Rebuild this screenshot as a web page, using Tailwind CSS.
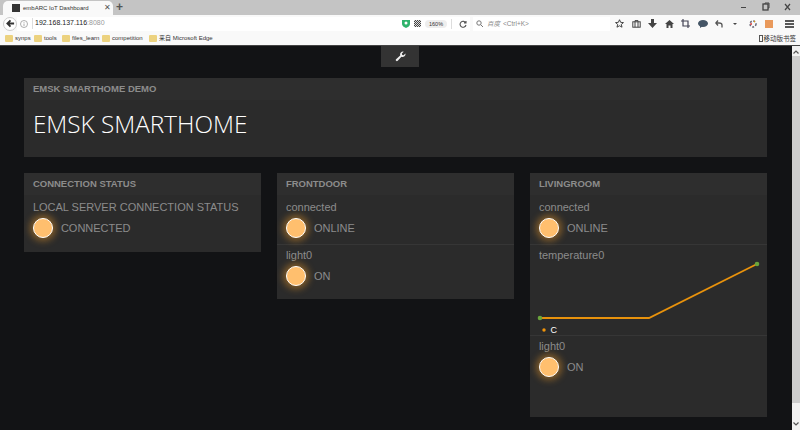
<!DOCTYPE html>
<html><head><meta charset="utf-8"><script src="https://cdn.jsdelivr.net/npm/@tailwindcss/browser@4"></script></head>
<body class="relative w-[800px] h-[430px] overflow-hidden bg-[#121315] font-['Liberation_Sans',sans-serif]">
<div class="h-[46px] flex flex-col bg-[#f9f9f9] border-b border-[#444]">
  <div class="h-[15px] bg-[#c4c4c4] flex items-end">
    <div class="ml-[3px] w-[110px] h-[14px] bg-[#f9f9f9] rounded-t-[5px] flex items-center pl-[9px] gap-[3px] text-[6px] text-[#333]">
      <span class="w-[8px] h-[8px] bg-[#333] shrink-0"></span><span class="w-[78px] whitespace-nowrap">embARC IoT Dashboard</span><span class="text-[#555] text-[8px]">✕</span>
    </div>
    <span class="ml-[3px] text-[12px] font-bold leading-[15px] text-[#555]">+</span>
    <div class="ml-auto flex items-center h-[15px] text-[#444]">
      <svg width="80" height="15" viewBox="0 0 80 15" fill="none" stroke="#444"><path d="M21 7.5h5"/><rect x="43" y="4" width="5" height="6" stroke-width="1.3"/><path d="M45 4V3h4v5h-1"/><path d="M65 4l5 6M70 4l-5 6" stroke-width="1.2"/></svg>
    </div>
  </div>
  <div class="h-[17px] flex items-center pl-[3px]">
    <div class="w-[14px] h-[14px] rounded-full border border-[#ccc] bg-white flex items-center justify-center shrink-0">
      <svg width="9" height="9" viewBox="0 0 10 10" fill="none" stroke="#333" stroke-width="2"><path d="M9 5H2M5 1.5L1.5 5 5 8.5"/></svg>
    </div>
    <div class="w-[453px] h-[14px] bg-white flex items-center text-[7px] text-[#222] relative">
      <svg class="ml-[3px] mr-[5px] shrink-0" width="8" height="8" viewBox="0 0 8 8" fill="none" stroke="#999" stroke-width="0.8"><circle cx="4" cy="4" r="3.5"/><path d="M4 3.5V6M4 2v.8"/></svg>
      <span class="border-l border-[#ddd] pl-[2px] -ml-[1px]">192.168.137.116<span class="text-[#999]">:8080</span></span>
      <div class="ml-auto flex items-center gap-[4px]">
        <svg width="8" height="9" viewBox="0 0 8 9"><path d="M0 1h8v4c0 2-2 3-4 4-2-1-4-2-4-4z" fill="#2fb36c"/><circle cx="4" cy="4" r="1.5" fill="#fff"/></svg>
        <span class="w-[7px] h-[7px] bg-[repeating-conic-gradient(#444_0_25%,#ddd_0_50%)] bg-[length:2px_2px]"></span>
        <span class="w-[22px] h-[8px] rounded-full bg-[#eee] text-[5.5px] leading-[8px] text-center text-[#333]">160%</span>
        <span class="w-px h-[10px] bg-[#ddd]"></span>
        <svg class="mx-[3px]" width="8" height="8" viewBox="0 0 8 8" fill="none" stroke="#555" stroke-width="1.1"><path d="M6.8 3A3 3 0 1 0 7 5M7 1v2H5"/></svg>
      </div>
    </div>
    <div class="w-[137px] h-[14px] bg-white ml-[3px] text-[6.5px] text-[#888] flex items-center pl-[3px] gap-[3px] font-['Liberation_Sans','Noto_Sans_CJK_SC',sans-serif]">
      <svg width="7" height="7" viewBox="0 0 7 7" fill="none" stroke="#777"><circle cx="3" cy="3" r="2.2"/><path d="M4.6 4.6L7 7"/></svg>
      <span class="ml-[1px] italic">百度</span><span>&lt;Ctrl+K&gt;</span>
    </div>
    <div class="flex-1 flex items-center pl-[5px] pr-[6px] justify-between">
      <svg width="9" height="9" viewBox="0 0 10 10" fill="none" stroke="#333" stroke-width="1"><path d="M5 .8l1.3 2.9 3.1.3-2.4 2 .8 3.1L5 7.5 2.2 9.1 3 6 .6 4l3.1-.3z"/></svg>
      <svg width="9" height="8" viewBox="0 0 9 8" fill="none" stroke="#444"><rect x=".8" y="1.8" width="7.4" height="5.4"/><path d="M3 1.8V.6h3v1.2M3 1.8v5.4M6 1.8v5.4"/></svg>
      <svg width="9" height="9" viewBox="0 0 9 9" fill="#444"><path d="M3 0h3v4h3L4.5 9 0 4h3z"/></svg>
      <svg width="9" height="8" viewBox="0 0 9 8" fill="#444"><path d="M4.5 0L9 4H7.5v4h-2V5.5h-2V8h-2V4H0z"/></svg>
      <svg width="9" height="9" viewBox="0 0 9 9" fill="none" stroke="#445" stroke-width="1.2"><path d="M2 0v7h7M0 2h7v7"/></svg>
      <svg width="10" height="8" viewBox="0 0 10 8" fill="#456"><ellipse cx="5" cy="3.5" rx="5" ry="3.5"/><path d="M2 5v3l3-2z"/></svg>
      <svg width="8" height="8" viewBox="0 0 8 8" fill="none" stroke="#555" stroke-width="1.3"><path d="M7 7.5V5C7 3.5 6 3 4 3H1M3 .5L.8 3 3 5.5"/></svg>
      <svg width="8" height="8" viewBox="0 0 8 8"><path d="M4 5L2 3h4z" fill="#444"/></svg>
      <svg width="8" height="8" viewBox="0 0 8 8" fill="none" stroke-width="1.5" class="ml-[3px]"><circle cx="4" cy="4" r="3" stroke="#667" stroke-dasharray="2 1.5"/><path d="M1.2 4H3" stroke="#d33"/><path d="M5 1.5h1" stroke="#e90"/></svg>
      <span class="w-[8px] h-[8px] bg-[#e9995b]"></span>
      <svg class="ml-[5px]" width="9" height="8" viewBox="0 0 9 8" stroke="#222" stroke-width="1.3"><path d="M0 1h9M0 4h9M0 7h9"/></svg>
    </div>
  </div>
  <div class="h-[13px] flex items-center pl-[5px] text-[6px] text-[#333]">
    <div class="w-[29px] flex items-center gap-[2px]"><i class="w-[8px] h-[7px] rounded-[1px] bg-[#ecd27f]"></i><span>synps</span></div>
    <div class="w-[28px] flex items-center gap-[2px]"><i class="w-[8px] h-[7px] rounded-[1px] bg-[#ecd27f]"></i><span>tools</span></div>
    <div class="w-[40px] flex items-center gap-[2px]"><i class="w-[8px] h-[7px] rounded-[1px] bg-[#ecd27f]"></i><span>files_learn</span></div>
    <div class="w-[47px] flex items-center gap-[2px]"><i class="w-[8px] h-[7px] rounded-[1px] bg-[#ecd27f]"></i><span>competition</span></div>
    <div class="flex items-center gap-[2px]"><i class="w-[8px] h-[7px] rounded-[1px] bg-[#ecd27f]"></i><span class="font-['Liberation_Sans','Noto_Sans_CJK_SC',sans-serif]">来自 Microsoft Edge</span></div>
    <span class="ml-auto mr-[4px] flex items-center gap-[1px] text-[6.5px] font-['Noto_Sans_CJK_SC',sans-serif]"><i class="w-[4px] h-[7px] border border-[#555]"></i>移动版书签</span>
  </div>
</div>
<div class="flex justify-center"><div class="w-[38px] h-[21px] bg-[#333] flex items-center justify-center">
  <svg width="11" height="11" viewBox="0 0 24 24" fill="#eee"><path d="M23 7a6.5 6.5 0 0 1-9 5.6L6 21.5a2.6 2.6 0 0 1-3.7-3.7l9-8A6.5 6.5 0 0 1 19 1.5L15 5.5l.8 3 3 .8 3.8-3.8z"/></svg>
</div></div>
<div class="pl-[24.4px] pt-[11px] w-[767.4px] flex flex-col gap-[16px]">
  <div class="bg-[#2b2b2b] h-[79px]">
    <div class="h-[22px] px-[8.5px] flex items-center text-[9.5px] font-bold text-[#8c8c8c] bg-[#2e2e2e]">EMSK SMARTHOME DEMO</div>
    <div class="px-[8.5px] pt-[9px] text-[24.3px] leading-[30px] text-white font-['Open_Sans',sans-serif] font-light">EMSK SMARTHOME</div>
  </div>
  <div class="grid grid-cols-[237px_237px_237px] gap-x-[16px] items-start">
    <div class="bg-[#2b2b2b] h-[79px]">
      <div class="h-[22px] px-[8.5px] flex items-center text-[9.5px] font-bold text-[#8c8c8c] bg-[#2e2e2e]">CONNECTION STATUS</div>
      <div class="px-[8.5px] pt-[5px] text-[11px] leading-[14px] text-[#8c8c8c]">LOCAL SERVER CONNECTION STATUS</div>
      <div class="px-[8.5px] mt-[4px] flex items-center gap-[8px] text-[11px] text-[#8c8c8c]"><span class="w-[20px] h-[20px] rounded-full bg-[#ffbf6e] border-[1.5px] border-white shadow-[0_0_7px_3px_rgba(255,165,40,0.42)]"></span>CONNECTED</div>
    </div>
    <div class="bg-[#2b2b2b] h-[126px]">
      <div class="h-[22px] px-[8.5px] flex items-center text-[9.5px] font-bold text-[#8c8c8c] bg-[#2e2e2e]">FRONTDOOR</div>
      <div class="h-[50px] border-b border-[#363636] px-[8.5px] pt-[5px] text-[11px] leading-[14px] text-[#8c8c8c]">connected
        <div class="mt-[4px] flex items-center gap-[8px]"><span class="w-[20px] h-[20px] rounded-full bg-[#ffbf6e] border-[1.5px] border-white shadow-[0_0_7px_3px_rgba(255,165,40,0.42)]"></span>ONLINE</div></div>
      <div class="px-[8.5px] pt-[3px] text-[11px] leading-[14px] text-[#8c8c8c]">light0
        <div class="mt-[4px] flex items-center gap-[8px]"><span class="w-[20px] h-[20px] rounded-full bg-[#ffbf6e] border-[1.5px] border-white shadow-[0_0_7px_3px_rgba(255,165,40,0.42)]"></span>ON</div></div>
    </div>
    <div class="bg-[#2b2b2b] h-[244px]">
      <div class="h-[22px] px-[8.5px] flex items-center text-[9.5px] font-bold text-[#8c8c8c] bg-[#2e2e2e]">LIVINGROOM</div>
      <div class="h-[50px] border-b border-[#363636] px-[8.5px] pt-[5px] text-[11px] leading-[14px] text-[#8c8c8c]">connected
        <div class="mt-[4px] flex items-center gap-[8px]"><span class="w-[20px] h-[20px] rounded-full bg-[#ffbf6e] border-[1.5px] border-white shadow-[0_0_7px_3px_rgba(255,165,40,0.42)]"></span>ONLINE</div></div>
      <div class="h-[91px] border-b border-[#363636] relative px-[8.5px] pt-[3px] text-[11px] leading-[14px] text-[#8c8c8c]">temperature0
        <svg class="absolute left-0 top-0" width="237" height="91"><polyline points="10,73 119,73 227,19" fill="none" stroke="#e8920c" stroke-width="1.8"/><circle cx="10" cy="73" r="2.3" fill="#6aa43c"/><circle cx="227" cy="19" r="2.3" fill="#6aa43c"/><circle cx="14" cy="85" r="1.7" fill="#f0940a"/></svg>
        <span class="absolute left-[20px] top-[78px] text-[9px] text-white">C</span>
      </div>
      <div class="px-[8.5px] pt-[3px] text-[11px] leading-[14px] text-[#8c8c8c]">light0
        <div class="mt-[4px] flex items-center gap-[8px]"><span class="w-[20px] h-[20px] rounded-full bg-[#ffbf6e] border-[1.5px] border-white shadow-[0_0_7px_3px_rgba(255,165,40,0.42)]"></span>ON</div></div>
    </div>
  </div>
</div>
<div class="absolute right-0 top-[46px] bottom-0 w-[8px] bg-[#f1f1f1] flex flex-col items-center">
  <svg class="mt-[4px]" width="6" height="4" viewBox="0 0 6 4" fill="none" stroke="#555" stroke-width="1.2"><path d="M.5 3.5L3 1l2.5 2.5"/></svg>
  <div class="mt-[2px] w-full h-[347px] bg-[#cdcdcd]"></div>
  <svg class="mt-auto mb-[4px]" width="6" height="4" viewBox="0 0 6 4" fill="none" stroke="#555" stroke-width="1.2"><path d="M.5.5L3 3l2.5-2.5"/></svg>
</div>
</body></html>
